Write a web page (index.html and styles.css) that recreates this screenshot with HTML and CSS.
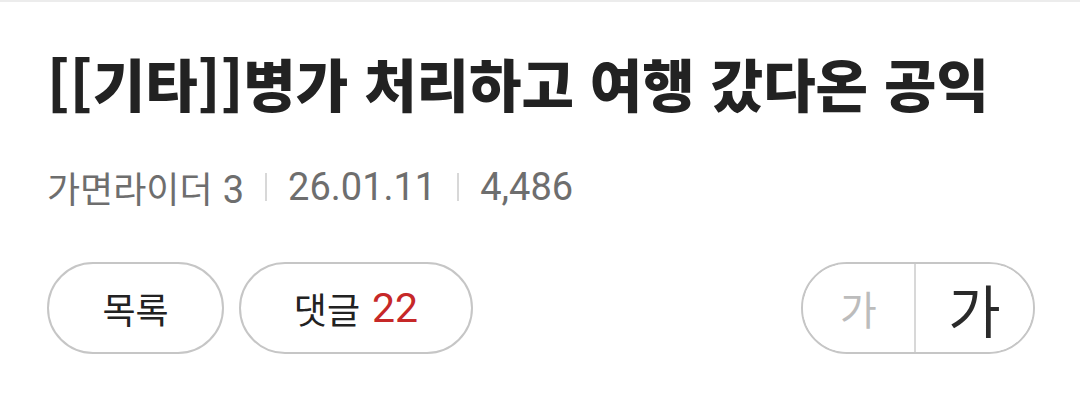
FILE: index.html
```html
<!DOCTYPE html>
<html lang="ko">
<head>
<meta charset="utf-8">
<link rel="stylesheet" href="styles.css">
</head>
<body>
<div class="page">
  <h1 class="title">[[기타]]병가 처리하고 여행 갔다온 공익</h1>
  <div class="meta">
    <span class="author">가면라이더 <span class="num">3</span></span>
    <span class="sep"></span>
    <span class="num">26.01.11</span>
    <span class="sep"></span>
    <span class="num">4,486</span>
  </div>
  <div class="actions">
    <div class="left">
      <button class="pill list">목록</button>
      <button class="pill comments">댓글 <span class="count">22</span></button>
    </div>
    <div class="fontsize">
      <button class="fs small">가</button>
      <button class="fs big">가</button>
    </div>
  </div>
</div>
</body>
</html>
```
FILE: styles.css
```css
html, body {
  margin: 0;
  padding: 0;
  background: #fff;
}
body {
  width: 1080px;
  height: 414px;
  overflow: hidden;
  border-top: 2px solid #ececec;
  box-sizing: border-box;
  font-family: "Noto Sans CJK KR", "Noto Sans", sans-serif;
}
.page {
  padding: 0 45px 0 47px;
}
.title {
  margin: 0;
  padding-top: 40px;
  font-size: 57px;
  line-height: 80px;
  font-weight: 900;
  color: #222;
  letter-spacing: 0;
  white-space: nowrap;
}
.meta {
  display: flex;
  align-items: center;
  margin-top: 40px;
  height: 50px;
  font-size: 36px;
  color: #6e6e6e;
}
.meta .num {
  font-family: Roboto, "Noto Sans CJK KR", sans-serif;
  font-size: 38px;
}
.sep {
  width: 2px;
  height: 28px;
  background: #d8d8d8;
  margin: 0 21px;
}
.actions {
  display: flex;
  justify-content: space-between;
  margin-top: 50px;
}
.left {
  display: flex;
  gap: 15px;
}
button {
  font-family: inherit;
  background: #fff;
  margin: 0;
  padding: 0;
  cursor: pointer;
}
.pill {
  height: 92px;
  border: 2px solid #c6c6c6;
  border-radius: 46px;
  font-size: 36px;
  color: #222;
  display: flex;
  align-items: center;
  justify-content: center;
}
.list { width: 177px; }
.comments { width: 234px; }
.count {
  font-family: Roboto, sans-serif;
  font-size: 41px;
  color: #c62828;
  margin-left: 12px;
}
.fontsize {
  display: flex;
  height: 92px;
  width: 234px;
  border: 2px solid #c6c6c6;
  border-radius: 46px;
  box-sizing: border-box;
  overflow: hidden;
  margin-left: auto;
}
.fs {
  border: 0;
  display: flex;
  align-items: center;
  justify-content: center;
}
.small {
  width: 113px;
  border-right: 2px solid #d8d8d8;
  font-size: 40px;
  color: #bcbcbc;
}
.big {
  flex: 1;
  font-size: 57px;
  color: #2a2a2a;
}
```
